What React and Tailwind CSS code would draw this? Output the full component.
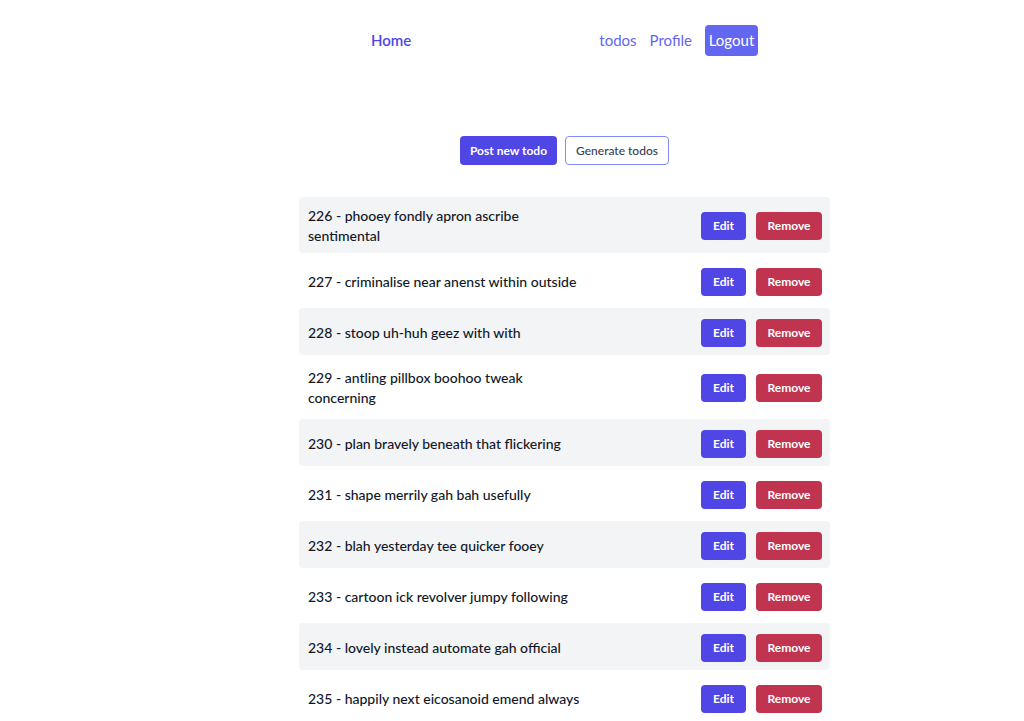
import React from 'react'

const todos = [
  { id: 226, title: 'phooey fondly apron ascribe sentimental' },
  { id: 227, title: 'criminalise near anenst within outside' },
  { id: 228, title: 'stoop uh-huh geez with with' },
  { id: 229, title: 'antling pillbox boohoo tweak concerning' },
  { id: 230, title: 'plan bravely beneath that flickering' },
  { id: 231, title: 'shape merrily gah bah usefully' },
  { id: 232, title: 'blah yesterday tee quicker fooey' },
  { id: 233, title: 'cartoon ick revolver jumpy following' },
  { id: 234, title: 'lovely instead automate gah official' },
  { id: 235, title: 'happily next eicosanoid emend always' },
]

const Nav = () => (
  <nav className="pt-[25px]">
    <div className="ml-[371px] w-[387px] flex items-center justify-between">
      <a className="text-[15px] font-semibold text-[#4f46e5]">Home</a>
      <div className="flex items-center gap-[13px] text-[15px]">
        <a className="text-[#6366f1]">todos</a>
        <a className="text-[#6366f1]">Profile</a>
        <button className="h-[31px] w-[53px] rounded bg-[#6366f1] text-white">Logout</button>
      </div>
    </div>
  </nav>
)

const TodoRow = ({ todo, striped }) => (
  <div className={`flex items-center justify-between min-h-[47px] pt-[9px] pb-[7px] pl-[9px] pr-[8px] rounded ${striped ? 'bg-[#f3f4f6]' : ''}`}>
    <p className="max-w-[283px] text-[14px] leading-[20px] font-medium text-gray-900">
      {todo.id} - {todo.title}
    </p>
    <div className="flex items-center gap-[10px]">
      <button className="w-[45px] h-[28px] rounded bg-[#5046e5] text-white text-[12px] font-bold">Edit</button>
      <button className="w-[66px] h-[28px] rounded bg-[#c0344f] text-white text-[12px] font-bold">Remove</button>
    </div>
  </div>
)

export default function App() {
  return (
    <div className="min-h-screen bg-white" style={{ fontFamily: 'Lato, "Noto Sans", sans-serif' }}>
      <Nav />
      <div className="mt-[80px] pl-[105px] flex justify-center gap-[8px]">
        <button className="h-[29px] w-[97px] rounded bg-[#4f46e5] text-white text-[12px] font-bold">Post new todo</button>
        <button className="h-[29px] w-[104px] rounded border border-[#818cf8] text-gray-700 text-[12px] font-medium">Generate todos</button>
      </div>
      <div className="mt-[32px] ml-[299px] w-[531px] flex flex-col gap-[4px]">
        {todos.map((t, i) => (
          <TodoRow key={t.id} todo={t} striped={i % 2 === 0} />
        ))}
      </div>
    </div>
  )
}
